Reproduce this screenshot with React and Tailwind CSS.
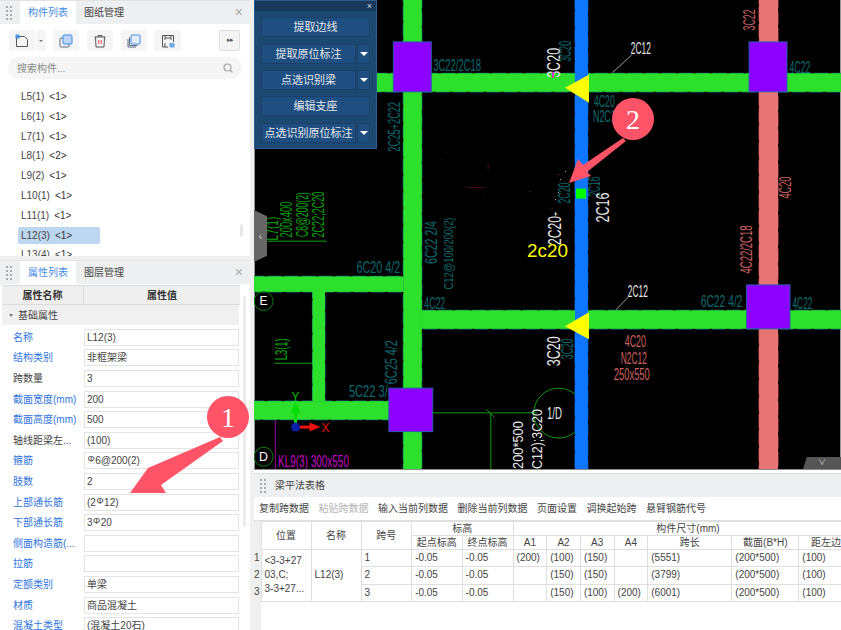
const FONT = "font-['Liberation_Sans','Noto_Sans_CJK_SC',sans-serif]";

const TEAL = '#0b6a70';
const PINK = '#cf6262';
const WHITE = '#e8e8e8';
const DGREEN = '#0aa50a';
const GREEN = '#2ce02c';

// CAD label: x/y is the centre, w the length along the text direction
function T({ x, y, w, s = 16, c = TEAL, r = false, children }) {
  return (
    <text
      x={x}
      y={y}
      fontSize={s}
      fill={c}
      textAnchor="middle"
      dominantBaseline="central"
      textLength={w}
      lengthAdjust="spacingAndGlyphs"
      fontFamily="'Liberation Sans', sans-serif"
      transform={r ? `rotate(-90 ${x} ${y})` : undefined}
    >
      {children}
    </text>
  );
}

const BEAMS = [
  { x: 759.5, y: -4, w: 19, h: 478, fill: '#e87575', edge: '#a03c3c' },
  { x: 254, y: 73.5, w: 590, h: 18.5, fill: GREEN, edge: '#12707a' },
  { x: 403, y: -4, w: 18.5, h: 478, fill: GREEN, edge: '#12707a' },
  { x: 421, y: 311, w: 424, h: 18.5, fill: GREEN, edge: '#12707a' },
  { x: 250, y: 277, w: 153, h: 15.5, fill: GREEN, edge: '#12707a' },
  { x: 312, y: 292, w: 12.5, h: 110, fill: GREEN, edge: '#12707a' },
  { x: 250, y: 402, w: 140, h: 18.5, fill: GREEN, edge: '#12707a' },
  { x: 575, y: -4, w: 13, h: 478, fill: '#0f76ff', edge: '#0a3f90' },
];

function Column({ x, y, w, h }) {
  return <rect x={x} y={y} width={w} height={h} fill="#8b00ff" stroke="#2f5ab0" strokeWidth="1" />;
}

function Drawing() {
  return (
    <svg className="block w-full h-full" viewBox="254 0 587 470">
      <rect x="254" y="0" width="587" height="470" fill="#000" />
      {/* edges first, so junctions between beams stay clean */}
      {BEAMS.map((b, i) => (
        <rect key={i} x={b.x} y={b.y} width={b.w} height={b.h} fill="none" stroke={b.edge} strokeWidth="1.2" strokeDasharray="14 3" />
      ))}
      {BEAMS.map((b, i) => (
        <rect key={i} x={b.x} y={b.y} width={b.w} height={b.h} fill={b.fill} />
      ))}
      <Column x={393} y={42} w={38} h={50} />
      <Column x={749.5} y={42} w={38} h={50} />
      <Column x={747} y={285.5} w={43.5} h={44} />
      <Column x={388.5} y={389} w={44} h={43.5} />
      <polygon points="565,88 589,75 589,103" fill="#ffff00" />
      <polygon points="565,327 589,313 589,340" fill="#ffff00" />
      <rect x="576" y="189" width="10" height="10" fill="#00ff00" />

      {/* thin lines */}
      <path d="M267 241.7H326" stroke={DGREEN} />
      <path d="M274 364H312" stroke={DGREEN} />
      <path d="M432 413.7H537M490.7 414V470M486 410L494 418" stroke="#0a9a0a" fill="none" />
      <path d="M274.7 421V470" stroke="#a000a0" />
      <path d="M632 55L612.7 72.7M629 297L616 310.7" stroke="#9a9a9a" />
      <path d="M575 395A25 25 0 1 0 575 433" fill="none" stroke="#0a9a0a" />
      <circle cx="263" cy="301.7" r="9.5" fill="none" stroke="#0a7a0a" />
      <circle cx="263" cy="457.7" r="9.5" fill="none" stroke="#0a7a0a" />

      {/* specks */}
      <path d="M441 160h1M483 199h1M529 192h2M553 197h2M557 175h3M551 209h2M510 205h1M488 164v6M466 188h18" stroke="#5a1414" fill="none" strokeWidth="0.8" />
      <path d="M558 193h1M555 200h1M560 180h1M565 172h1" stroke="#bbb" fill="none" />

      {/* labels */}
      <T x={457} y={66} w={48}>3C22/2C18</T>
      <T x={394} y={127} w={50} r>2C25+2C22</T>
      <T x={431} y={243} w={43} r>6C22 2/4</T>
      <T x={448} y={254} w={72} s={13} r>C12@100/200(2)</T>
      <T x={286} y={220} w={36} c={DGREEN} r>200x400</T>
      <T x={302} y={215} w={45} c={DGREEN} r>C8@200(2)</T>
      <T x={318} y={215} w={46} c={DGREEN} r>2C22;2C20</T>
      <T x={272} y={229} w={24} c={DGREEN} r>L7(1)</T>
      <T x={378} y={268} w={44}>6C20 4/2</T>
      <T x={434.5} y={304} w={21}>4C22</T>
      <T x={368} y={392.7} w={39}>5C22 3/</T>
      <T x={391} y={363} w={44} r>6C25 4/2</T>
      <T x={281} y={350} w={22} c={DGREEN} r>L3(1)</T>
      <T x={313} y={462.7} w={71} c="#c800c8">KL9(3) 300x550</T>
      <T x={263} y={301.7} w={8} c="#fff" s={12}>E</T>
      <T x={263} y={457.7} w={9} c="#fff" s={12}>D</T>
      <T x={517} y={446} w={48} c={WHITE} s={15} r>200*500</T>
      <T x={537} y={440} w={60} c={WHITE} s={14} r>C12);3C20</T>
      <T x={554} y={63} w={30} c={WHITE} s={18} r>3C20</T>
      <T x={566} y={51.5} w={21} r>3C20</T>
      <path d="M553 72V78" stroke="#d040c0" strokeWidth="2" />
      <T x={641} y={49} w={20} c={WHITE}>2C12</T>
      <T x={750} y={20} w={21} c={PINK} r>3C22</T>
      <T x={800.5} y={68} w={21}>4C22</T>
      <T x={604.5} y={102} w={21}>4C20</T>
      <T x={607} y={117} w={28}>N2C12</T>
      <T x={595} y={187} w={20} r>2C16</T>
      <T x={603} y={208} w={30} c={WHITE} s={18} r>2C16</T>
      <T x={565} y={193.5} w={21} r>2C20</T>
      <T x={555} y={229} w={33} c={WHITE} s={18} r>2C20-</T>
      <T x={747} y={250} w={48} c={PINK} r>4C22/2C18</T>
      <T x={786} y={188} w={22} c={PINK} r>4C20</T>
      <T x={638} y={291.7} w={20} c={WHITE}>2C12</T>
      <T x={722} y={301.7} w={42}>6C22 4/2</T>
      <T x={803} y={304} w={20}>4C22</T>
      <T x={554} y={352} w={30} c={WHITE} s={18} r>3C20</T>
      <T x={568} y={349.5} w={21} r>3C20</T>
      <T x={635.5} y={342} w={21} c={PINK}>4C20</T>
      <T x={634} y={359} w={26} c={PINK}>N2C12</T>
      <T x={632} y={375} w={36} c={PINK}>250x550</T>
      <T x={554.5} y={414} w={15} c={WHITE}>1/D</T>
      <T x={547.5} y={251.5} w={41} c="#ffff00" s={18}>2c20</T>

      {/* axis */}
      <path d="M295 428V409" stroke="#00e000" strokeWidth="3" />
      <polygon points="295,403 290,414 300,414" fill="#00e000" />
      <path d="M295 428H310" stroke="#f01010" strokeWidth="3" />
      <polygon points="320,428 309,423.5 309,432.5" fill="#f01010" />
      <circle cx="295" cy="428" r="4.5" fill="#0a1ea8" />
      <T x={295} y={397} w={8} c="#00c000" s={13}>Y</T>
      <T x={325} y={428} w={8} c="#f01010" s={13}>X</T>
    </svg>
  );
}

function Caret() {
  return <span className="w-0 h-0 border-x-[4px] border-x-transparent border-t-[4px] border-t-white" />;
}

function FloatBtn({ label, split, cls }) {
  return (
    <div className={`flex gap-px ${cls}`}>
      <div className="flex-1 flex items-center justify-center bg-[#1f4e80] border border-[#1a3f68] text-[11px] text-[#e4e9ee]">
        {label}
      </div>
      {split && (
        <div className="w-[13px] flex items-center justify-center bg-[#1f4e80] border border-[#1a3f68]">
          <Caret />
        </div>
      )}
    </div>
  );
}

function FloatPanel() {
  return (
    <div className="absolute left-0 top-0 w-[123px] h-[149px] bg-[#1d4872] border border-[#2b5c90] flex flex-col">
      <div className="h-[10px] bg-[#18395c] flex items-center justify-end pr-[4px]">
        <span className="text-[9px] leading-none text-[#c6d4e2]">×</span>
      </div>
      <div className="flex flex-col px-[6px] pt-[6px]">
        <FloatBtn label="提取边线" cls="h-[20px] mb-[7px]" />
        <FloatBtn label="提取原位标注" split cls="h-[20px] mb-[6px]" />
        <FloatBtn label="点选识别梁" split cls="h-[20px] mb-[6px]" />
        <FloatBtn label="编辑支座" cls="h-[20px] mb-[7px]" />
        <FloatBtn label="点选识别原位标注" split cls="h-[20px]" />
      </div>
    </div>
  );
}

function Grip() {
  return (
    <div className="w-[6px] grid grid-cols-2 gap-[2px] ml-[6px] mr-[8px]">
      {[0, 1, 2, 3, 4, 5, 6, 7].map((i) => (
        <span key={i} className="w-[2px] h-[2px] bg-[#a9a9a9]" />
      ))}
    </div>
  );
}

function PanelHeader({ a, b }) {
  return (
    <div className="h-[23px] flex items-stretch bg-[#eeeff1] text-[10px] shrink-0">
      <div className="flex items-center">
        <Grip />
      </div>
      <div className="w-[56px] flex items-center justify-center bg-white text-[#3f8ae6]">{a}</div>
      <div className="w-[56px] flex items-center justify-center text-[#444]">{b}</div>
      <div className="flex-1 flex items-center justify-end pr-[7px] text-[#a9a9a9] text-[14px]">×</div>
    </div>
  );
}

function IconBtn({ children, cls = 'w-[26px]' }) {
  return <div className={`h-[21px] rounded-[3px] bg-[#f5f5f5] flex items-center justify-center ${cls}`}>{children}</div>;
}

function Toolbar() {
  return (
    <div className="h-[21px] mt-[6px] ml-[9px] flex items-center">
      <IconBtn>
        <svg width="14" height="14" viewBox="0 0 14 14" fill="none">
          <path d="M1.5 2.5H9.5L12.5 5.5V12.5H1.5Z" stroke="#555" />
          <rect x="0.5" y="0.5" width="4" height="4" fill="#4a8fe0" />
        </svg>
      </IconBtn>
      <div className="w-[10px] h-[21px] ml-px bg-[#f5f5f5] rounded-r-[3px] flex items-center justify-center">
        <span className="w-0 h-0 border-x-[2px] border-x-transparent border-t-[2px] border-t-[#777]" />
      </div>
      <IconBtn cls="w-[26px] ml-[7px]">
        <svg width="14" height="14" viewBox="0 0 14 14" fill="none">
          <rect x="1" y="4" width="9" height="9" rx="1" stroke="#5a6b7c" />
          <rect x="4" y="1" width="9" height="9" rx="1" fill="#bcd6f5" stroke="#3f8ae6" />
        </svg>
      </IconBtn>
      <IconBtn cls="w-[26px] ml-[8px]">
        <svg width="14" height="14" viewBox="0 0 14 14" fill="none">
          <path d="M1.5 3H12.5M5 3V1.5H9V3M2.5 3L3 13H11L11.5 3" stroke="#555" />
          <path d="M5.8 6V10M8.2 6V10" stroke="#e04040" />
        </svg>
      </IconBtn>
      <IconBtn cls="w-[26px] ml-[8px]">
        <svg width="14" height="14" viewBox="0 0 14 14" fill="none">
          <path d="M1 5V13H9M2.5 3.5V11.5H10.5" stroke="#5a6b7c" />
          <rect x="4" y="1" width="9" height="9" rx="1" fill="#e4eefa" stroke="#3f8ae6" />
        </svg>
      </IconBtn>
      <IconBtn cls="w-[27px] ml-[7px]">
        <svg width="14" height="14" viewBox="0 0 14 14" fill="none">
          <path d="M7 13H1.5V1.5H12.5V8" stroke="#555" />
          <path d="M4 1.5V6M4 4H10M10 1.5V6M4 13V9" stroke="#555" />
          <rect x="8.5" y="9" width="5" height="4.5" fill="#6ea8ea" />
        </svg>
      </IconBtn>
      <div className="w-[21px] h-[21px] ml-[38px] rounded-[2px] bg-[#f4f4f4] border border-[#dfdfdf] flex items-center justify-center text-[#555] text-[7px] tracking-[-1px]">
        ▸▸
      </div>
    </div>
  );
}

const LIST = [
  ['L5(1)', '<1>'],
  ['L6(1)', '<1>'],
  ['L7(1)', '<1>'],
  ['L8(1)', '<2>'],
  ['L9(2)', '<1>'],
  ['L10(1)', '<1>'],
  ['L11(1)', '<1>'],
  ['L12(3)', '<1>'],
  ['L13(4)', '<1>'],
];

function ListPanel() {
  return (
    <div className="h-[256px] w-[250px] bg-white border-t border-[#e3e3e3] flex flex-col overflow-hidden">
      <PanelHeader a="构件列表" b="图纸管理" />
      <Toolbar />
      <div className="h-[22px] mt-[6px] mx-[8px] rounded-full bg-[#f5f5f5] flex items-center justify-between px-[9px] text-[10px] text-[#8a8a8a]">
        <span>搜索构件...</span>
        <svg width="10" height="10" viewBox="0 0 10 10" fill="none" stroke="#a5a5a5" strokeWidth="1.2">
          <circle cx="4.5" cy="4.5" r="3.5" />
          <path d="M7 7L9.5 9.5" />
        </svg>
      </div>
      <div className="relative mt-[9px] flex-1 overflow-hidden pl-[18px]">
        {LIST.map(([n, c], i) => (
          <div
            key={n}
            className={`h-[17px] mb-[2.8px] w-[82px] pl-[3px] flex items-center gap-[5px] rounded-[2px] text-[10px] text-[#444] ${i === 7 ? 'bg-[#bed7f1]' : ''}`}
          >
            <span>{n}</span>
            <span className="text-[#333]">{c}</span>
          </div>
        ))}
        <div className="absolute left-[240px] top-[136px] w-[3px] h-[13px] rounded-full bg-[#e9e9e9]" />
      </div>
    </div>
  );
}

const PROPS = [
  ['名称', 'L12(3)', 1],
  ['结构类别', '非框架梁', 1],
  ['跨数量', '3', 0],
  ['截面宽度(mm)', '200', 1],
  ['截面高度(mm)', '500', 1],
  ['轴线距梁左...', '(100)', 0],
  ['箍筋', 'Φ6@200(2)', 1],
  ['肢数', '2', 1],
  ['上部通长筋', '(2Φ12)', 1],
  ['下部通长筋', '3Φ20', 1],
  ['侧面构造筋(...', '', 1],
  ['拉筋', '', 1],
  ['定额类别', '单梁', 1],
  ['材质', '商品混凝土', 1],
  ['混凝土类型', '(混凝土20石)', 1],
];

// the rebar grade mark sits small and raised in the value text
function RebarValue({ text }) {
  const i = text.indexOf('Φ');
  if (i < 0) return text;
  return (
    <>
      {text.slice(0, i)}
      <span className="inline-block text-[9px] leading-none -translate-y-[2px] mx-[0.5px]">Φ</span>
      {text.slice(i + 1)}
    </>
  );
}

function PropPanel() {
  return (
    <div className="relative h-[370px] mt-[4px] w-[250px] bg-white border-t border-[#e3e3e3] flex flex-col overflow-hidden">
      <PanelHeader a="属性列表" b="图层管理" />
      <div className="h-[20px] mt-px ml-[2px] w-[238px] flex bg-[#efefef] border-y border-[#dcdcdc] text-[10px] text-[#333] font-bold shrink-0">
        <div className="w-[82px] flex items-center justify-center border-r border-[#dcdcdc]">属性名称</div>
        <div className="flex-1 flex items-center justify-center">属性值</div>
      </div>
      <div className="h-[20px] ml-[2px] w-[237px] flex items-center bg-[#f0f0f0] text-[10px] text-[#444] pl-[7px] gap-[5px] shrink-0">
        <span className="w-0 h-0 border-x-[2.5px] border-x-transparent border-t-[3px] border-t-[#777]" />
        基础属性
      </div>
      <div className="flex flex-col pt-[2px]">
        {PROPS.map(([k, v, blue]) => (
          <div key={k} className="h-[20.6px] flex items-center shrink-0">
            <div className={`w-[84px] pl-[13px] text-[10px] whitespace-nowrap ${blue ? 'text-[#2f74e0]' : 'text-[#444]'}`}>{k}</div>
            <div className="w-[155px] h-[17px] border border-[#e4e4e4] pl-[2px] flex items-center text-[10px] text-[#444] whitespace-pre">
              <span><RebarValue text={v} /></span>
            </div>
          </div>
        ))}
      </div>
      <div className="absolute left-[243px] top-[35px] w-[3px] h-[230px] rounded-full bg-[#ececec]" />
    </div>
  );
}

const HEAD2 = ['A1', 'A2', 'A3', 'A4', '跨长', '截面(B*H)', '距左边线'];
const ROWS = [
  ['1', '(200)', '(100)', '(150)', '', '(5551)', '(200*500)', '(100)'],
  ['2', '', '(150)', '(150)', '', '(3799)', '(200*500)', '(100)'],
  ['3', '', '(150)', '(100)', '(200)', '(6001)', '(200*500)', '(100)'],
];
const WIDTHS = [50, 50, 50.6, 50.4, 51, 33.6, 33.7, 33.7, 33.7, 84, 67, 64];

function BeamTable() {
  const th = 'border border-[#dfdfdf] font-normal text-[#444] text-center p-0';
  const td = 'border border-[#dfdfdf] text-[#444] pl-[3px] text-left';
  return (
    <div className="flex-1 bg-white flex flex-col overflow-hidden">
      <div className="h-[3px] bg-white shrink-0" />
      <div className="h-[24px] bg-[#eeeff1] border-t border-[#dcdcdc] flex items-center text-[10px] text-[#444] shrink-0">
        <Grip />
        <span className="ml-[1px]">梁平法表格</span>
      </div>
      <div className="h-[23px] flex items-center pl-[5px] text-[10px] text-[#444] whitespace-nowrap gap-[9.5px] shrink-0">
        <span>复制跨数据</span>
        <span className="text-[#b5b5b5]">粘贴跨数据</span>
        <span>输入当前列数据</span>
        <span>删除当前列数据</span>
        <span>页面设置</span>
        <span>调换起始跨</span>
        <span>悬臂钢筋代号</span>
      </div>
      <div className="flex flex-1 overflow-hidden border-t border-[#dfdfdf]">
        <div className="w-[6.5px] shrink-0 bg-[#efefef] flex flex-col text-[10px] text-[#444] leading-none">
          <div className="h-[28px]" />
          <div className="h-[17.3px] flex items-center">1</div>
          <div className="h-[17.3px] flex items-center">2</div>
          <div className="h-[17.3px] flex items-center">3</div>
        </div>
        <table className="table-fixed border-collapse text-[10px] leading-[12px] whitespace-nowrap w-[603px] self-start shrink-0">
          <colgroup>
            {WIDTHS.map((w, i) => (
              <col key={i} style={{ width: w }} />
            ))}
          </colgroup>
          <thead>
            <tr className="h-[14px]">
              <th rowSpan={2} className={th}>位置</th>
              <th rowSpan={2} className={th}>名称</th>
              <th rowSpan={2} className={th}>跨号</th>
              <th colSpan={2} className={th}>标高</th>
              <th colSpan={7} className={th}>构件尺寸(mm)</th>
            </tr>
            <tr className="h-[14px]">
              <th className={th}>起点标高</th>
              <th className={th}>终点标高</th>
              {HEAD2.map((h) => (
                <th key={h} className={`${th} overflow-hidden`}>{h}</th>
              ))}
            </tr>
          </thead>
          <tbody>
            {ROWS.map((r, i) => (
              <tr key={r[0]} className="h-[17.3px]">
                {i === 0 && (
                  <td rowSpan={3} className={`${td} leading-[14px]`}>
                    &lt;3-3+27
                    <br />
                    03,C;
                    <br />
                    3-3+27...
                  </td>
                )}
                {i === 0 && <td rowSpan={3} className={td}>L12(3)</td>}
                <td className={td}>{r[0]}</td>
                <td className={td}>-0.05</td>
                <td className={td}>-0.05</td>
                {r.slice(1).map((c, j) => (
                  <td key={j} className={td}>{c}</td>
                ))}
              </tr>
            ))}
          </tbody>
        </table>
      </div>
    </div>
  );
}

export default function App() {
  return (
    <div className={`relative w-[841px] h-[630px] overflow-hidden flex bg-[#f0f0f0] ${FONT}`}>
      <div className="w-[254px] shrink-0 flex flex-col">
        <ListPanel />
        <PropPanel />
      </div>
      <div className="flex-1 flex flex-col min-w-0">
        <div className="relative h-[470px] shrink-0 border-b border-[#8a8a8a]">
          <Drawing />
          <FloatPanel />
          {/* collapse handles */}
          <div className="absolute left-0 top-[210px] w-[13px] h-[52px] bg-[#666] [clip-path:polygon(0_0,100%_12%,100%_88%,0_100%)] flex items-center justify-center text-[10px] text-[#cfcfcf]">
            ‹
          </div>
          <div className="absolute right-0 bottom-0 w-[38px] h-[12px] bg-[#555] [clip-path:polygon(10%_0,100%_0,100%_100%,0_100%)] flex items-center justify-center text-[8px] text-[#c8c8c8]">
            ∨
          </div>
        </div>
        <BeamTable />
      </div>
      {/* numbered callouts */}
      <svg className="absolute left-0 top-0 w-[841px] h-[630px] pointer-events-none" viewBox="0 0 841 630">
        <polygon points="130,493 148,468 220,437 223,441 161,485 166,493" fill="#ff5468" />
        <circle cx="228" cy="417" r="21" fill="#ff5468" />
        <text x="228" y="427" fontSize="28" fill="#fff" textAnchor="middle" fontFamily="'Liberation Serif', serif">1</text>
        <polygon points="569,183 578,159 583,165 623,138 626,141 587,172 591,176" fill="#ff5468" />
        <circle cx="633" cy="119" r="21" fill="#ff5468" />
        <text x="633" y="129" fontSize="28" fill="#fff" textAnchor="middle" fontFamily="'Liberation Serif', serif">2</text>
      </svg>
    </div>
  );
}
